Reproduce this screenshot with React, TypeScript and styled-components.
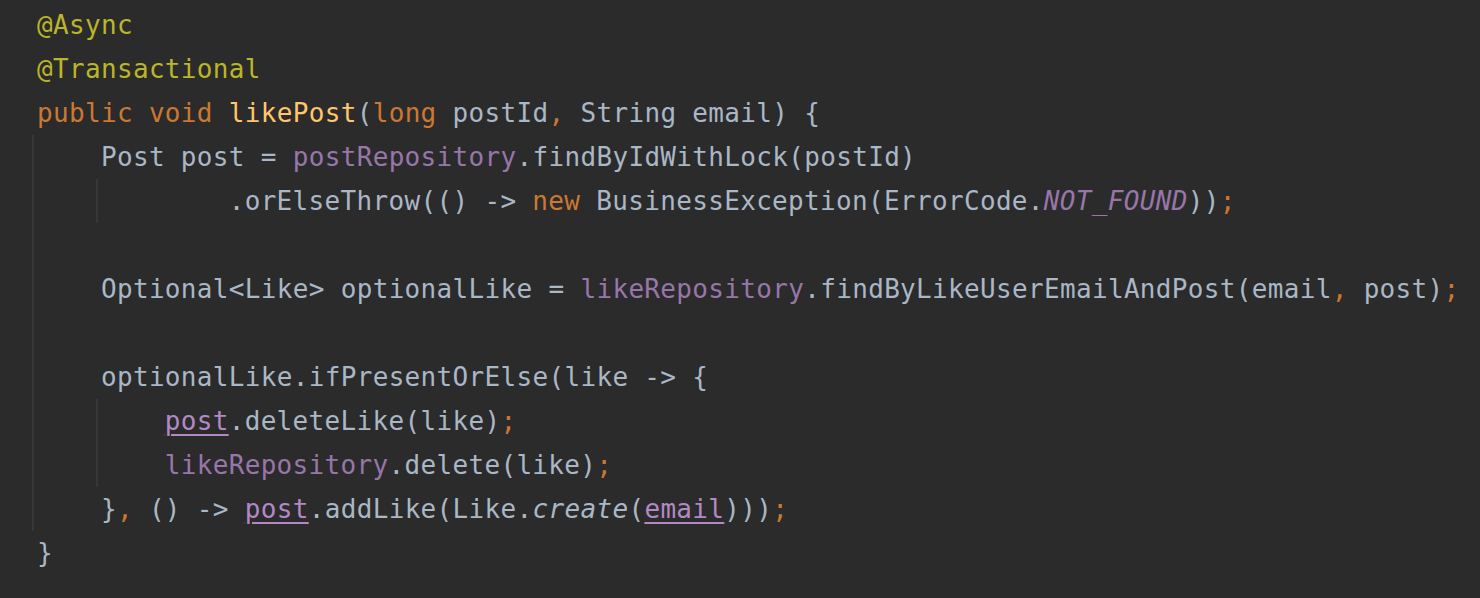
import React from "react";
import styled, { createGlobalStyle, css } from "styled-components";

const CH = 15.95;

const Global = createGlobalStyle`
  html, body { margin: 0; padding: 0; background: #2b2b2b; }
  body { width: 1480px; height: 598px; overflow: hidden; }
`;

const Editor = styled.div`
  box-sizing: border-box;
  width: 1480px;
  height: 598px;
  background: #2b2b2b;
  padding: 3px 0 0 37px;
  font-family: "DejaVu Sans Mono", "Liberation Mono", monospace;
  font-size: 26px;
  letter-spacing: 0.33px;
  color: #a9b7c6;
`;

const Line = styled.div`
  height: 44px;
  line-height: 44px;
  white-space: pre;
`;

const Block = styled.div<{ $col: number }>`
  margin-left: ${(p) => p.$col * CH - 5}px;
  border-left: 2px solid #373737;
  padding-left: 3px;
`;

type Kind =
  | "ann"
  | "kw"
  | "decl"
  | "field"
  | "constant"
  | "staticCall"
  | "captured"
  | "punct";

const T = styled.span<{ $k: Kind }>`
  ${(p) => p.$k === "ann" && css`color: #bbb529;`}
  ${(p) => p.$k === "kw" && css`color: #cc7832;`}
  ${(p) => p.$k === "punct" && css`color: #cc7832;`}
  ${(p) => p.$k === "decl" && css`color: #ffc66d;`}
  ${(p) => p.$k === "field" && css`color: #9876aa;`}
  ${(p) => p.$k === "constant" && css`color: #9876aa; font-style: italic;`}
  ${(p) => p.$k === "staticCall" && css`font-style: italic;`}
  ${(p) =>
    p.$k === "captured" &&
    css`
      color: #b389c5;
      text-decoration: underline;
      text-decoration-thickness: 2px;
      text-underline-offset: 4px;
    `}
`;

export default function App() {
  return (
    <>
      <Global />
      <Editor>
        <Line>
          <T $k="ann">@Async</T>
        </Line>
        <Line>
          <T $k="ann">@Transactional</T>
        </Line>
        <Line>
          <T $k="kw">public void </T>
          <T $k="decl">likePost</T>(<T $k="kw">long </T>postId<T $k="punct">, </T>
          String email) {"{"}
        </Line>
        <Block $col={0}>
          <Line>
            {"    Post post = "}
            <T $k="field">postRepository</T>.findByIdWithLock(postId)
          </Line>
          <Block $col={4}>
            <Line>
              {"        .orElseThrow(() -> "}
              <T $k="kw">new </T>BusinessException(ErrorCode.
              <T $k="constant">NOT_FOUND</T>))<T $k="punct">;</T>
            </Line>
          </Block>
          <Line> </Line>
          <Line>
            {"    Optional<Like> optionalLike = "}
            <T $k="field">likeRepository</T>.findByLikeUserEmailAndPost(email
            <T $k="punct">, </T>post)<T $k="punct">;</T>
          </Line>
          <Line> </Line>
          <Line>{"    optionalLike.ifPresentOrElse(like -> {"}</Line>
          <Block $col={4}>
            <Line>
              {"    "}
              <T $k="captured">post</T>.deleteLike(like)<T $k="punct">;</T>
            </Line>
            <Line>
              {"    "}
              <T $k="field">likeRepository</T>.delete(like)<T $k="punct">;</T>
            </Line>
          </Block>
          <Line>
            {"    }"}
            <T $k="punct">, </T>
            {"() -> "}
            <T $k="captured">post</T>.addLike(Like.
            <T $k="staticCall">create</T>(<T $k="captured">email</T>)))
            <T $k="punct">;</T>
          </Line>
        </Block>
        <Line>{"}"}</Line>
      </Editor>
    </>
  );
}
